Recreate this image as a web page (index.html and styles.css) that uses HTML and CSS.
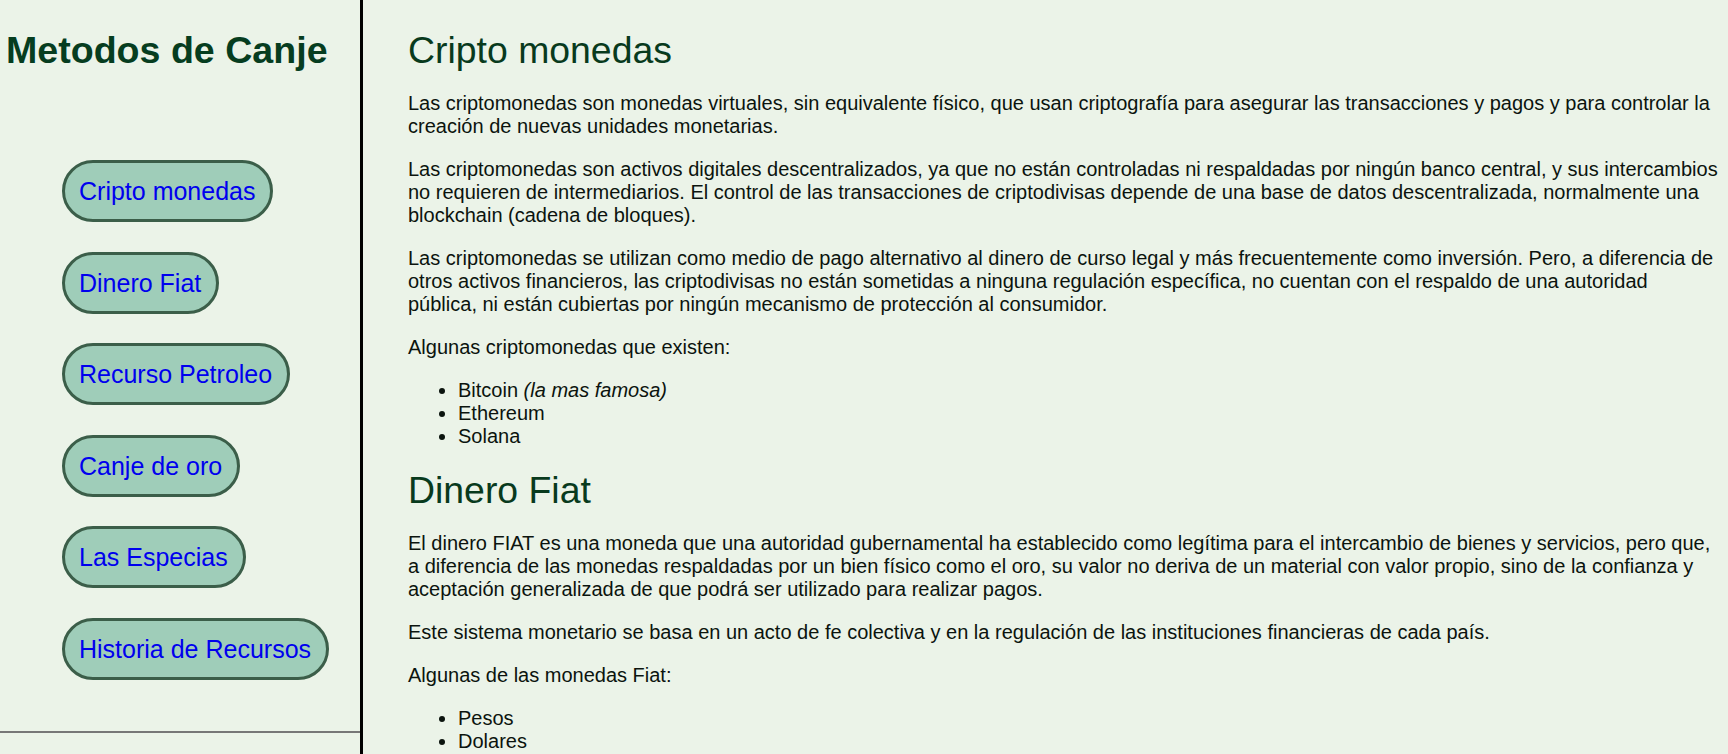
FILE: index.html
```html
<!DOCTYPE html>
<html lang="es">
<head>
<meta charset="utf-8">
<title>Metodos de Canje</title>
<link rel="stylesheet" href="styles.css">
</head>
<body>
<aside class="sidebar">
  <h1 class="sidebar-title">Metodos de Canje</h1>
  <ul class="nav">
    <li><a class="nav-btn" href="#cripto">Cripto monedas</a></li>
    <li><a class="nav-btn" href="#fiat">Dinero Fiat</a></li>
    <li><a class="nav-btn" href="#petroleo">Recurso Petroleo</a></li>
    <li><a class="nav-btn" href="#oro">Canje de oro</a></li>
    <li><a class="nav-btn" href="#especias">Las Especias</a></li>
    <li><a class="nav-btn" href="#historia">Historia de Recursos</a></li>
  </ul>
  <div class="sidebar-foot"></div>
</aside>
<main class="content">
  <section id="cripto">
    <h2>Cripto monedas</h2>
    <p>Las criptomonedas son monedas virtuales, sin equivalente físico, que usan criptografía para asegurar las transacciones y pagos y para controlar la creación de nuevas unidades monetarias.</p>
    <p>Las criptomonedas son activos digitales descentralizados, ya que no están controladas ni respaldadas por ningún banco central, y sus intercambios no requieren de intermediarios. El control de las transacciones de criptodivisas depende de una base de datos descentralizada, normalmente una blockchain (cadena de bloques).</p>
    <p>Las criptomonedas se utilizan como medio de pago alternativo al dinero de curso legal y más frecuentemente como inversión. Pero, a diferencia de otros activos financieros, las criptodivisas no están sometidas a ninguna regulación específica, no cuentan con el respaldo de una autoridad pública, ni están cubiertas por ningún mecanismo de protección al consumidor.</p>
    <p>Algunas criptomonedas que existen:</p>
    <ul>
      <li>Bitcoin <em>(la mas famosa)</em></li>
      <li>Ethereum</li>
      <li>Solana</li>
    </ul>
  </section>
  <section id="fiat">
    <h2>Dinero Fiat</h2>
    <p>El dinero FIAT es una moneda que una autoridad gubernamental ha establecido como legítima para el intercambio de bienes y servicios, pero que, a diferencia de las monedas respaldadas por un bien físico como el oro, su valor no deriva de un material con valor propio, sino de la confianza y aceptación generalizada de que podrá ser utilizado para realizar pagos.</p>
    <p>Este sistema monetario se basa en un acto de fe colectiva y en la regulación de las instituciones financieras de cada país.</p>
    <p>Algunas de las monedas Fiat:</p>
    <ul>
      <li>Pesos</li>
      <li>Dolares</li>
    </ul>
  </section>
</main>
</body>
</html>
```
FILE: styles.css
```css
html, body {
  margin: 0;
  padding: 0;
}
body {
  background: #ebf3e8;
  font-family: "Liberation Sans", Arial, sans-serif;
  color: #0b140e;
  display: flex;
  align-items: flex-start;
}
.sidebar {
  flex: 0 0 360px;
  width: 360px;
  height: 100vh;
  border-right: 3px solid #000;
  position: sticky;
  top: 0;
  display: flex;
  flex-direction: column;
  box-sizing: content-box;
}
.sidebar-title {
  font-size: 37.6px;
  font-weight: bold;
  color: #063d1f;
  margin: 29px 0 0 6px;
  line-height: 42px;
}
.nav {
  list-style: none;
  margin: 89px 0 0;
  padding: 0 0 0 62px;
  display: flex;
  flex-direction: column;
  align-items: flex-start;
  gap: 29.5px;
}
.nav li {
  display: block;
}
.nav-btn {
  display: inline-block;
  font-size: 25px;
  line-height: 29px;
  color: #0000ee;
  text-decoration: none;
  background: #9fcdb9;
  border: 3px solid #3b5e49;
  border-radius: 32px;
  padding: 14px 15px 13px 14px;
}
.sidebar-foot {
  margin-top: auto;
  height: 21px;
  border-top: 2px solid #777;
}
.content {
  flex: 1 1 auto;
  padding: 8px 8px 0 45px;
  min-width: 0;
}
.content h2 {
  font-size: 37.4px;
  font-weight: normal;
  color: #083a1d;
  margin: 21px 0 20px;
  line-height: normal;
}
.content p {
  font-size: 20px;
  margin: 20px 0;
  line-height: normal;
}
.content ul {
  font-size: 20px;
  margin: 20px 0;
  padding-left: 50px;
}
```
